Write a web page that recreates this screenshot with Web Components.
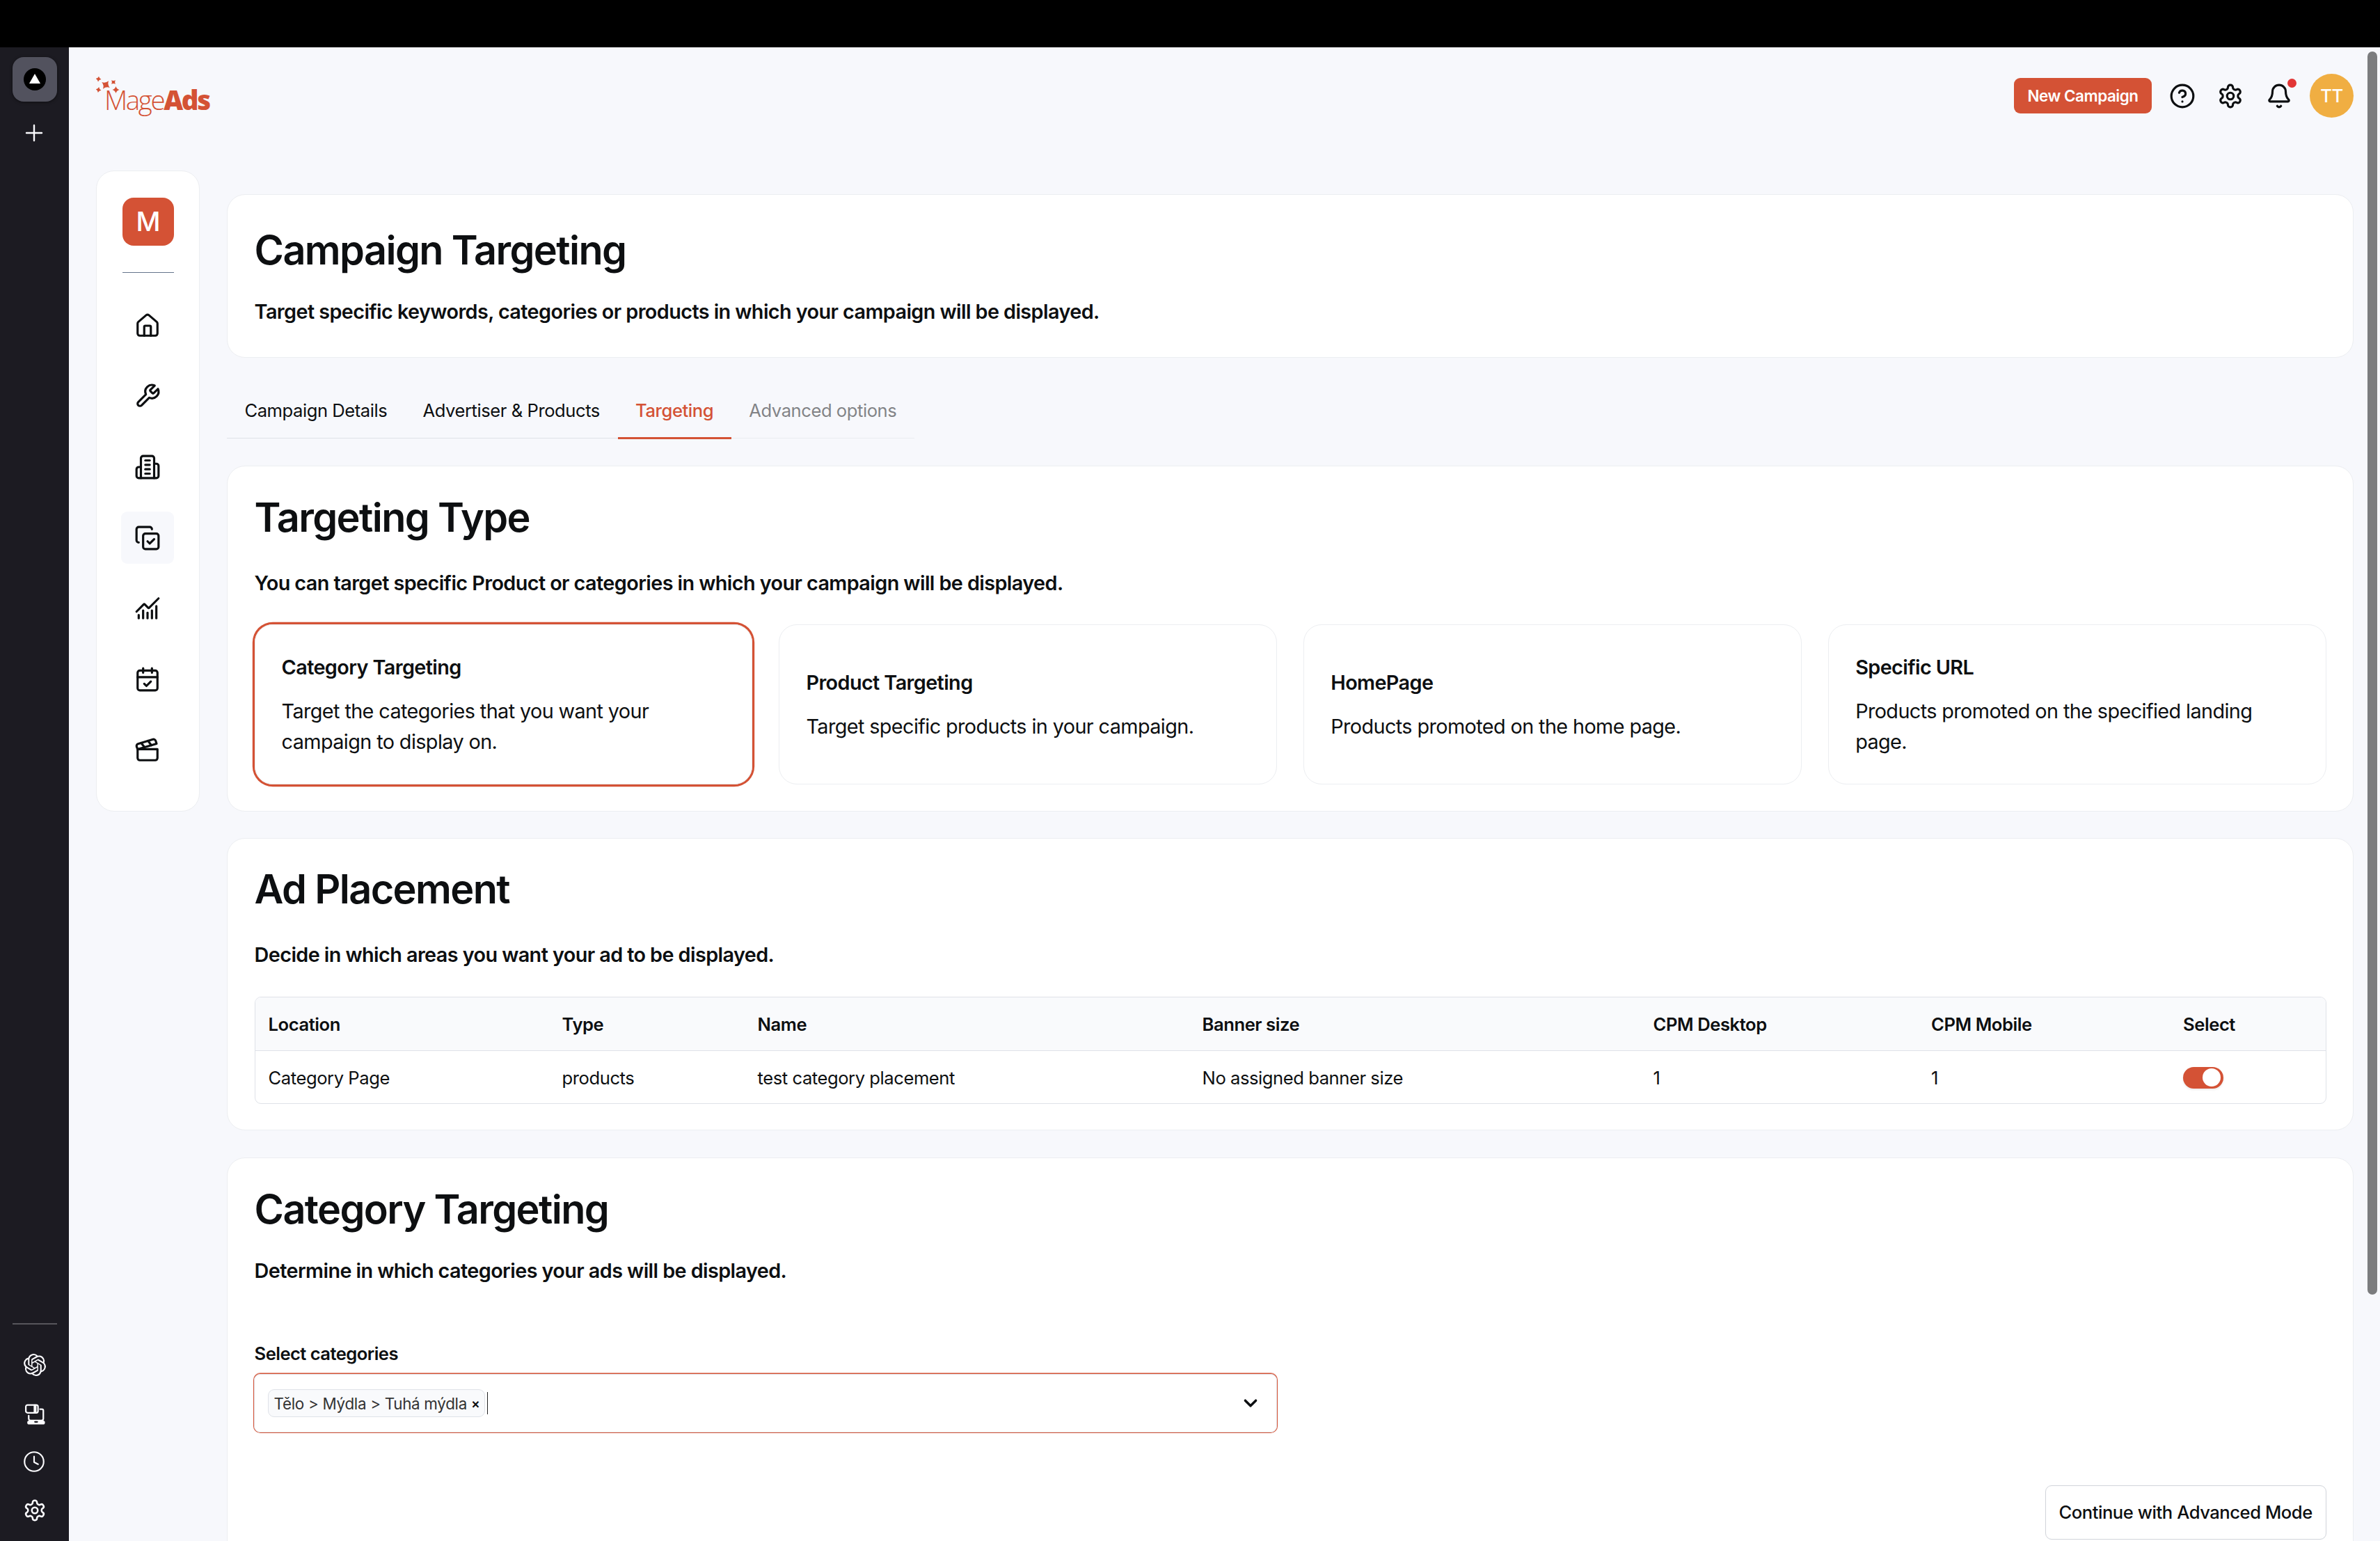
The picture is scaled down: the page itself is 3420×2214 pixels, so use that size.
<!DOCTYPE html>
<html lang="en">
<head>
<meta charset="utf-8">
<title>MageAds - Campaign Targeting</title>
<style>
  html, body { margin: 0; height: 2214px; overflow: hidden; }
  body {
    --accent: #d45235;
    --page: #f7f8fc;
    --line: #dfe2e8;
    --soft-line: #eceef1;
    --ink: #0d0f11;
    background: #000;
    color: var(--ink);
    font-family: Inter, "Liberation Sans", sans-serif;
    font-size: 25.6px;
    letter-spacing: -.45px;
  }
</style>
</head>
<body>
<ads-app></ads-app>
<script>
const ICONS = {
  help: '<circle cx="12" cy="12" r="10"/><path d="M9.09 9a3 3 0 0 1 5.83 1c0 2-3 3-3 3"/><path d="M12 17h.01"/>',
  gear: '<path d="M12.22 2h-.44a2 2 0 0 0-2 2v.18a2 2 0 0 1-1 1.73l-.43.25a2 2 0 0 1-2 0l-.15-.08a2 2 0 0 0-2.73.73l-.22.38a2 2 0 0 0 .73 2.73l.15.1a2 2 0 0 1 1 1.72v.51a2 2 0 0 1-1 1.74l-.15.09a2 2 0 0 0-.73 2.73l.22.38a2 2 0 0 0 2.73.73l.15-.08a2 2 0 0 1 2 0l.43.25a2 2 0 0 1 1 1.73V20a2 2 0 0 0 2 2h.44a2 2 0 0 0 2-2v-.18a2 2 0 0 1 1-1.73l.43-.25a2 2 0 0 1 2 0l.15.08a2 2 0 0 0 2.73-.73l.22-.39a2 2 0 0 0-.73-2.73l-.15-.08a2 2 0 0 1-1-1.74v-.5a2 2 0 0 1 1-1.74l.15-.09a2 2 0 0 0 .73-2.73l-.22-.38a2 2 0 0 0-2.73-.73l-.15.08a2 2 0 0 1-2 0l-.43-.25a2 2 0 0 1-1-1.73V4a2 2 0 0 0-2-2z"/><circle cx="12" cy="12" r="3"/>',
  bell: '<path d="M10.268 21a2 2 0 0 0 3.464 0"/><path d="M3.262 15.326A1 1 0 0 0 4 17h16a1 1 0 0 0 .74-1.673C19.41 13.956 18 12.499 18 8A6 6 0 0 0 6 8c0 4.499-1.411 5.956-2.738 7.326"/>',
  home: '<path d="M15 21v-8a1 1 0 0 0-1-1h-4a1 1 0 0 0-1 1v8"/><path d="M3 10a2 2 0 0 1 .709-1.528l7-5.999a2 2 0 0 1 2.582 0l7 5.999A2 2 0 0 1 21 10v9a2 2 0 0 1-2 2H5a2 2 0 0 1-2-2z"/>',
  wrench: '<path d="M14.7 6.3a1 1 0 0 0 0 1.4l1.6 1.6a1 1 0 0 0 1.4 0l3.77-3.77a6 6 0 0 1-7.94 7.94l-6.91 6.91a2.12 2.12 0 0 1-3-3l6.91-6.91a6 6 0 0 1 7.94-7.94l-3.76 3.76z"/>',
  building: '<path d="M6 22V4a2 2 0 0 1 2-2h8a2 2 0 0 1 2 2v18Z"/><path d="M6 12H4a2 2 0 0 0-2 2v6a2 2 0 0 0 2 2h2"/><path d="M18 9h2a2 2 0 0 1 2 2v9a2 2 0 0 1-2 2h-2"/><path d="M10 6h4"/><path d="M10 10h4"/><path d="M10 14h4"/><path d="M10 18h4"/>',
  copy: '<path d="m12 15 2 2 4-4"/><rect width="14" height="14" x="8" y="8" rx="2"/><path d="M4 16c-1.1 0-2-.9-2-2V4c0-1.1.9-2 2-2h10c1.1 0 2 .9 2 2"/>',
  chart: '<path d="M12 16v5"/><path d="M16 14v7"/><path d="M20 10v11"/><path d="m22 3-8.646 8.646a.5.5 0 0 1-.708 0L9.354 8.354a.5.5 0 0 0-.707 0L2 15"/><path d="M4 18v3"/><path d="M8 14v7"/>',
  calendar: '<path d="M8 2v4"/><path d="M16 2v4"/><rect width="18" height="18" x="3" y="4" rx="2"/><path d="M3 10h18"/><path d="m9 16 2 2 4-4"/>',
  clapper: '<path d="M20.2 6 3 11l-.9-2.4c-.3-1.1.3-2.2 1.3-2.5l13.5-4c1.1-.3 2.2.3 2.5 1.3Z"/><path d="m6.2 5.3 3.1 3.9"/><path d="m12.4 3.4 3.1 4"/><path d="M3 11h18v8a2 2 0 0 1-2 2H5a2 2 0 0 1-2-2Z"/>',
  chevron: '<path d="m5 8.5 7 7 7-7"/>',
  plus: '<path d="M12 1v22M1 12h22"/>',
  clock: '<circle cx="12" cy="12" r="11"/><path d="M12 6v6.6l4.6 2.4"/>',
  devices: '<rect x="1.7" y="1.2" width="14" height="9" rx="2"/><path d="M11.6 1.5v8.4M13 1.5v8.4"/><path d="M18 6h2.2a1.6 1.6 0 0 1 1.6 1.6V17a2 2 0 0 1-2 2H7a2 2 0 0 1-2-2v-3.6"/><path d="M5.6 21.4h15.8" stroke-width="4.6"/><path d="M12.2 20.6h2.6" stroke="#1c1b22"/>',
  knot: '<path stroke="none" fill="currentColor" d="M22.2819 9.8211a5.9847 5.9847 0 0 0-.5157-4.9108 6.0462 6.0462 0 0 0-6.5098-2.9A6.0651 6.0651 0 0 0 4.9807 4.1818a5.9847 5.9847 0 0 0-3.9977 2.9 6.0462 6.0462 0 0 0 .7427 7.0966 5.98 5.98 0 0 0 .511 4.9107 6.051 6.051 0 0 0 6.5146 2.9001A5.9847 5.9847 0 0 0 13.2599 24a6.0557 6.0557 0 0 0 5.7718-4.2058 5.9894 5.9894 0 0 0 3.9977-2.9001 6.0557 6.0557 0 0 0-.7475-7.0729zm-9.022 12.6081a4.4755 4.4755 0 0 1-2.8764-1.0408l.1419-.0804 4.7783-2.7582a.7948.7948 0 0 0 .3927-.6813v-6.7369l2.02 1.1686a.071.071 0 0 1 .038.052v5.5826a4.504 4.504 0 0 1-4.4945 4.4944zm-9.6607-4.1254a4.4708 4.4708 0 0 1-.5346-3.0137l.142.0852 4.783 2.7582a.7712.7712 0 0 0 .7806 0l5.8428-3.3685v2.3324a.0804.0804 0 0 1-.0332.0615L9.74 19.9502a4.4992 4.4992 0 0 1-6.1408-1.6464zM2.3408 7.8956a4.485 4.485 0 0 1 2.3655-1.9728V11.6a.7664.7664 0 0 0 .3879.6765l5.8144 3.3543-2.0201 1.1685a.0757.0757 0 0 1-.071 0l-4.8303-2.7865A4.504 4.504 0 0 1 2.3408 7.872zm16.5963 3.8558L13.1038 8.364 15.1192 7.2a.0757.0757 0 0 1 .071 0l4.8303 2.7913a4.4944 4.4944 0 0 1-.6765 8.1042v-5.6772a.79.79 0 0 0-.407-.667zm2.0107-3.0231l-.142-.0852-4.7735-2.7818a.7759.7759 0 0 0-.7854 0L9.409 9.2297V6.8974a.0662.0662 0 0 1 .0284-.0615l4.8303-2.7866a4.4992 4.4992 0 0 1 6.6802 4.66zM8.3065 12.863l-2.02-1.1638a.0804.0804 0 0 1-.038-.0567V6.0742a4.4992 4.4992 0 0 1 7.3757-3.4537l-.142.0805L8.704 5.459a.7948.7948 0 0 0-.3927.6813zm1.0976-2.3654l2.602-1.4998 2.6069 1.4998v2.9994l-2.5974 1.4997-2.6067-1.4997Z"/>'
};

class BaseElement extends HTMLElement {
  constructor() {
    super();
    this.attachShadow({ mode: 'open' });
  }
  connectedCallback() {
    this.shadowRoot.innerHTML = `<style>${this.constructor.styles}</style>${this.render()}`;
  }
}

class UiIcon extends BaseElement {
  static get styles() {
    return /* css */ `
      :host { display: block; width: var(--size, 38px); height: var(--size, 38px); flex: none; }
      svg { display: block; width: 100%; height: 100%; overflow: visible; fill: none; stroke: currentColor; stroke-linecap: round; stroke-linejoin: round; }
    `;
  }
  render() {
    const stroke = this.getAttribute('stroke') || 2;
    return `<svg viewBox="0 0 24 24" stroke-width="${stroke}">${ICONS[this.getAttribute('name')]}</svg>`;
  }
}
customElements.define('ui-icon', UiIcon);

// dark strip of the browser window
class BrowserRail extends BaseElement {
  static get styles() {
    return /* css */ `
      :host { display: flex; flex-direction: column; align-items: center; justify-content: space-between; width: 99px; box-sizing: border-box; padding: 14px 0 27px 1px; background: #1c1b22; color: #fbfbfe; }
      .top, .bottom { display: flex; flex-direction: column; align-items: center; }
      .tab { width: 64px; height: 64px; border-radius: 16px; background: #52525e; display: grid; place-items: center; margin-bottom: 33px; box-shadow: 0 1px 4px rgba(0,0,0,.5); }
      .tab svg { display: block; width: 32px; height: 32px; }
      .plus { --size: 24px; margin-right: 2px; }
      .rule { width: 64px; height: 2px; background: #57565c; margin-bottom: 42px; }
    `;
  }
  render() {
    return /* html */ `
      <div class="top">
        <div class="tab"><svg viewBox="0 0 32 32"><circle cx="16" cy="16" r="16"/><path d="M16 8 24 22H8z" fill="#fff"/></svg></div>
        <ui-icon class="plus" name="plus" stroke="2.4"></ui-icon>
      </div>
      <div class="bottom">
        <div class="rule"></div>
        <ui-icon name="knot" style="--size:32px;margin-bottom:40px"></ui-icon>
        <ui-icon name="devices" style="--size:30px;margin-bottom:38px" stroke="1.8"></ui-icon>
        <ui-icon name="clock" style="--size:30px;margin:0 2px 38px 0" stroke="1.7"></ui-icon>
        <ui-icon name="gear" style="--size:34px" stroke="1.8"></ui-icon>
      </div>
    `;
  }
}
customElements.define('browser-rail', BrowserRail);

class MageLogo extends BaseElement {
  static get styles() {
    return /* css */ `
      :host { display: block; position: relative; width: 170px; height: 62px; color: var(--accent); font-family: "Open Sans", sans-serif; }
      svg { position: absolute; left: 0; top: 0; width: 34px; height: 26px; fill: currentColor; }
      .word { padding: 6px 0 0 12px; font-size: 38.5px; line-height: 54px; white-space: nowrap; display: flex; }
      .mage { font-weight: 300; letter-spacing: -2.4px; }
      .ads { font-weight: 800; letter-spacing: -2.3px; }
    `;
  }
  render() {
    const star = (x, y, r, turn) => `<path transform="translate(${x} ${y}) rotate(${turn}) scale(${r})" d="M0-1Q.22-.22 1 0 .22.22 0 1-.22.22-1 0-.22-.22 0-1z"/>`;
    return /* html */ `
      <svg viewBox="0 0 34 26">
        ${star(3.5, 3.5, 4, 8)}${star(14, 12, 7, 35)}${star(25, 8, 4, 45)}${star(3.5, 19, 4, 10)}${star(28.5, 19, 5, 0)}
      </svg>
      <div class="word"><span class="mage">Mage</span><span class="ads">Ads</span></div>
    `;
  }
}
customElements.define('mage-logo', MageLogo);

class TopBar extends BaseElement {
  static get styles() {
    return /* css */ `
      :host { display: flex; justify-content: space-between; align-items: flex-start; height: 177px; box-sizing: border-box; padding: 38px 38px 0 39px; }
      mage-logo { margin-top: 4px; }
      .actions { display: flex; align-items: center; height: 63px; }
      .new { width: 198px; height: 51px; border-radius: 9px; background: var(--accent); color: #fff; font-weight: 600; font-size: 22.4px; line-height: 51px; text-align: center; margin-right: 25px; }
      .help { margin-right: 31px; }
      .gear { margin-right: 32px; }
      .bell { position: relative; margin-right: 25px; }
      .dot { position: absolute; left: 31px; top: -6px; width: 13px; height: 13px; border-radius: 50%; background: #e23636; }
      .avatar { width: 63px; height: 63px; border-radius: 50%; background: #f0ae42; color: #fff; font-size: 25.6px; font-weight: 500; line-height: 63px; text-align: center; }
    `;
  }
  render() {
    return /* html */ `
      <mage-logo></mage-logo>
      <div class="actions">
        <div class="new">New Campaign</div>
        <ui-icon class="help" name="help"></ui-icon>
        <ui-icon class="gear" name="gear"></ui-icon>
        <div class="bell"><ui-icon name="bell"></ui-icon><span class="dot"></span></div>
        <div class="avatar">TT</div>
      </div>
    `;
  }
}
customElements.define('top-bar', TopBar);

class SideNav extends BaseElement {
  static get styles() {
    return /* css */ `
      :host { display: flex; flex-direction: column; align-items: center; width: 149px; height: 921px; box-sizing: border-box; padding-top: 38px; border: 1px solid var(--soft-line); border-radius: 26px; background: #fff; }
      .brand { width: 74px; height: 69px; margin-left: 1px; border-radius: 16px; background: var(--accent); color: #fff; font-size: 38.4px; font-weight: 500; line-height: 69px; text-align: center; letter-spacing: 0; }
      .rule { width: 74px; height: 1px; margin: 38px 0 38px 1px; background: #64748b; }
      .item { width: 76px; height: 75px; margin: 0 1px 26.7px 0; border-radius: 9px; display: grid; place-items: center; }
      .item.active { background: var(--page); }
    `;
  }
  render() {
    const items = ['home', 'wrench', 'building', 'copy', 'chart', 'calendar', 'clapper'];
    return /* html */ `
      <div class="brand">M</div>
      <div class="rule"></div>
      ${items.map(name => `<div class="item${name === 'copy' ? ' active' : ''}"><ui-icon name="${name}"></ui-icon></div>`).join('')}
    `;
  }
}
customElements.define('side-nav', SideNav);

class PageCard extends BaseElement {
  static get styles() {
    return /* css */ `
      :host { display: block; box-sizing: border-box; padding: var(--top, 40px) 38.4px 0 38.6px; border: 1px solid var(--soft-line); border-radius: 26px; background: #fff; }
      h1 { margin: 0 0 var(--gap, 40px); font-size: 57.6px; line-height: 64px; font-weight: 600; letter-spacing: -1.62px; }
      p { margin: 0; font-size: 28.8px; line-height: 45px; font-weight: 600; letter-spacing: -.59px; }
    `;
  }
  render() {
    return `<h1>${this.getAttribute('heading')}</h1><p>${this.getAttribute('lead')}</p><slot></slot>`;
  }
}
customElements.define('page-card', PageCard);

class CampaignTabs extends BaseElement {
  static get styles() {
    return /* css */ `
      :host { display: flex; margin: 38px 0; height: 79px; }
      .tab { height: 78px; box-sizing: border-box; padding: 18.5px 25.8px 0 25.4px; line-height: 38.4px; border-bottom: 1px solid var(--line); white-space: nowrap; }
      .active { height: 79px; color: var(--accent); border-bottom: 3px solid var(--accent); font-weight: 500; }
      .off { opacity: .5; }
    `;
  }
  render() {
    return /* html */ `
      <div class="tab">Campaign Details</div>
      <div class="tab">Advertiser &amp; Products</div>
      <div class="tab active">Targeting</div>
      <div class="tab off">Advanced options</div>
    `;
  }
}
customElements.define('campaign-tabs', CampaignTabs);

class TargetOption extends BaseElement {
  static get styles() {
    return /* css */ `
      :host { display: flex; flex-direction: column; justify-content: center; box-sizing: border-box; height: 230px; padding: 0 38.4px 0 38px; border: 1px solid var(--soft-line); border-radius: 26px; font-size: 28.8px; line-height: 44px; letter-spacing: -.6px; }
      :host([selected]) { box-shadow: 0 0 0 3.2px var(--accent); }
      h3 { margin: 0 0 19px; font-size: inherit; font-weight: 600; }
    `;
  }
  render() {
    return `<h3>${this.getAttribute('heading')}</h3><slot></slot>`;
  }
}
customElements.define('target-option', TargetOption);

class PlacementTable extends BaseElement {
  static get styles() {
    return /* css */ `
      :host { display: block; margin-top: 38px; height: 154px; box-sizing: border-box; border: 1px solid var(--line); border-radius: 9px; overflow: hidden; }
      .row { display: grid; grid-template-columns: 422px 281px 639px 648px 399.5px 362px 1fr; align-items: center; height: 76px; padding-left: 19px; }
      .head { background: #f9fafc; border-bottom: 1px solid var(--line); font-weight: 600; }
      .switch { display: flex; justify-content: flex-end; width: 57.6px; height: 31px; box-sizing: border-box; padding: 2.6px 4px; border-radius: 16px; background: var(--accent); box-shadow: 0 2px 3px rgba(0,0,0,.08); }
      .switch::after { content: ""; width: 26px; height: 26px; border-radius: 50%; background: #fff; }
    `;
  }
  render() {
    return /* html */ `
      <div class="row head"><span>Location</span><span>Type</span><span>Name</span><span>Banner size</span><span>CPM Desktop</span><span>CPM Mobile</span><span>Select</span></div>
      <div class="row"><span>Category Page</span><span>products</span><span>test category placement</span><span>No assigned banner size</span><span>1</span><span>1</span><span class="switch"></span></div>
    `;
  }
}
customElements.define('placement-table', PlacementTable);

class CategorySelect extends BaseElement {
  static get styles() {
    return /* css */ `
      :host { display: block; margin-top: 78px; }
      label { display: block; line-height: 38.4px; font-weight: 600; letter-spacing: -.55px; margin-bottom: 9.6px; }
      .field { display: flex; align-items: center; width: 1470px; height: 84px; box-sizing: border-box; margin-left: -1px; padding: 0 24px 0 19px; border: 1px solid #e2e4ea; border-radius: 9px; box-shadow: 0 0 0 1px var(--accent), 0 -1px 0 1px rgba(212,82,53,.5); }
      .chip { display: flex; align-items: center; height: 40px; width: 312.5px; box-sizing: border-box; padding-left: 8px; border: 1px solid var(--line); border-radius: 9px; background: #f9fafc; color: #333; font-size: 22.4px; letter-spacing: -.3px; white-space: nowrap; }
      .chip b { margin-left: 6px; font-weight: 600; color: var(--ink); font-size: 19px; }
      .caret { width: 1px; height: 32px; margin-left: 3px; background: #222; }
      ui-icon { margin-left: auto; --size: 26px; }
    `;
  }
  render() {
    return /* html */ `
      <label>Select categories</label>
      <div class="field">
        <div class="chip"><span>Tělo &gt; Mýdla &gt; Tuhá mýdla</span><b>×</b></div>
        <span class="caret"></span>
        <ui-icon name="chevron" stroke="3.2"></ui-icon>
      </div>
    `;
  }
}
customElements.define('category-select', CategorySelect);

class OutlineButton extends BaseElement {
  static get styles() {
    return /* css */ `
      :host { display: block; width: 404px; height: 78px; box-sizing: border-box; margin: 76px 0 0 auto; border: 1px solid #d1d4da; border-radius: 9px; font-weight: 500; line-height: 76px; text-align: center; white-space: nowrap; }
    `;
  }
  render() {
    return '<slot></slot>';
  }
}
customElements.define('outline-button', OutlineButton);

class AdsApp extends BaseElement {
  static get styles() {
    return /* css */ `
      :host { display: flex; box-sizing: border-box; height: 2214px; padding-top: 68px; overflow: hidden; }
      .page { position: relative; flex: 1; background: var(--page); overflow: hidden; }
      .body { display: grid; grid-template-columns: 149px 1fr; gap: 39px; padding: 0 38px 0 39px; align-items: start; }
      main { padding-top: 34px; }
      .intro { height: 235px; --top: 47px; --gap: 34px; }
      .type { height: 497px; --top: 41px; }
      .placement { height: 420px; margin-top: 38px; --top: 40px; }
      .category { height: 700px; margin-top: 39px; --top: 41px; --gap: 34px; }
      .options { display: grid; grid-template-columns: repeat(4, 1fr); gap: 38.4px; margin-top: 37px; }
      .scroll { position: absolute; right: 4px; top: 6px; width: 14px; height: 1786px; border-radius: 7px; background: #7b7c7e; }
    `;
  }
  render() {
    return /* html */ `
      <browser-rail></browser-rail>
      <div class="page">
        <top-bar></top-bar>
        <div class="body">
          <side-nav></side-nav>
          <main>
            <page-card class="intro" heading="Campaign Targeting" lead="Target specific keywords, categories or products in which your campaign will be displayed."></page-card>
            <campaign-tabs></campaign-tabs>
            <page-card class="type" heading="Targeting Type" lead="You can target specific Product or categories in which your campaign will be displayed.">
              <div class="options">
                <target-option selected heading="Category Targeting">Target the categories that you want your campaign to display on.</target-option>
                <target-option heading="Product Targeting">Target specific products in your campaign.</target-option>
                <target-option heading="HomePage">Products promoted on the home page.</target-option>
                <target-option heading="Specific URL">Products promoted on the specified landing page.</target-option>
              </div>
            </page-card>
            <page-card class="placement" heading="Ad Placement" lead="Decide in which areas you want your ad to be displayed.">
              <placement-table></placement-table>
            </page-card>
            <page-card class="category" heading="Category Targeting" lead="Determine in which categories your ads will be displayed.">
              <category-select></category-select>
              <outline-button>Continue with Advanced Mode</outline-button>
            </page-card>
          </main>
        </div>
        <div class="scroll"></div>
      </div>
    `;
  }
}
customElements.define('ads-app', AdsApp);
</script>
</body>
</html>
